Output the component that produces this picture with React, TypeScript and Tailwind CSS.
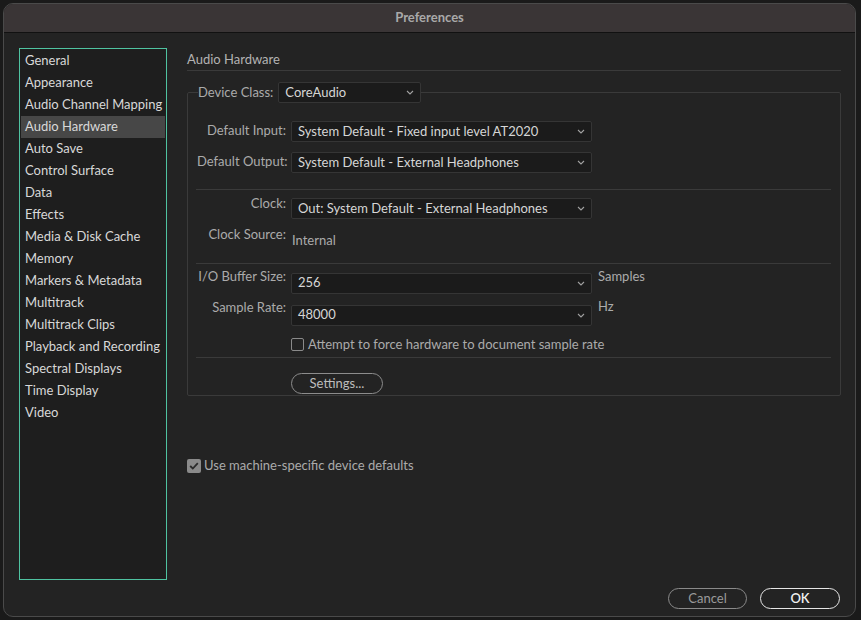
import React from "react";

const sections = [
  "General",
  "Appearance",
  "Audio Channel Mapping",
  "Audio Hardware",
  "Auto Save",
  "Control Surface",
  "Data",
  "Effects",
  "Media & Disk Cache",
  "Memory",
  "Markers & Metadata",
  "Multitrack",
  "Multitrack Clips",
  "Playback and Recording",
  "Spectral Displays",
  "Time Display",
  "Video",
];

function Chevron() {
  return (
    <svg width="8" height="5" viewBox="0 0 8 5" className="shrink-0">
      <path d="M1 1 L4 4 L7 1" fill="none" stroke="#a0a0a0" strokeWidth="1.1" />
    </svg>
  );
}

function Dropdown({ value, width }: { value: string; width: string }) {
  return (
    <div
      className={`${width} h-[21px] shrink-0 flex items-center justify-between pl-[6px] pr-[6px] bg-[#1b1b1b] border border-[#353535] rounded-[2px] text-[13px] text-[#d6d6d6]`}
    >
      <span>{value}</span>
      <Chevron />
    </div>
  );
}

function Label({ children, mt = 0 }: { children: React.ReactNode; mt?: number }) {
  return (
    <div className="w-[89px] shrink-0 text-right text-[13px] text-[#ababab] whitespace-nowrap" style={{ marginTop: mt }}>
      {children}
    </div>
  );
}

function Separator() {
  return <div className="h-px bg-[#3a3a3a] -ml-px" />;
}

export default function App() {
  return (
    <div
      className="w-[861px] h-[620px] bg-[#1a1a1a] p-[3px] pr-[5px]"
      style={{ fontFamily: "Lato, 'Noto Sans', sans-serif" }}
    >
      <div className="h-[614px] flex flex-col rounded-[10px] overflow-hidden border border-[#4a4a4a] bg-[#232323]">
        {/* Title bar */}
        <div className="h-[29px] shrink-0 flex items-center justify-center bg-[#3a3536] border-b border-[#111111]">
          <span className="text-[13px] font-bold text-[#a9a9a9]">Preferences</span>
        </div>

        {/* Body */}
        <div className="flex flex-1 pt-[15px] pl-[15px] pr-[14px]">
          {/* Sidebar */}
          <div className="w-[148px] h-[532px] shrink-0 border border-[#4fc3a1] bg-[#1e1e1e] p-px">
            {sections.map((s) => (
              <div
                key={s}
                className={`h-[22px] flex items-center pl-[4px] text-[13px] text-[#d8d8d8] whitespace-nowrap ${
                  s === "Audio Hardware" ? "bg-[#474747]" : ""
                }`}
              >
                {s}
              </div>
            ))}
          </div>

          {/* Right column */}
          <div className="flex-1 ml-[20px] flex flex-col">
            <div className="h-[23px] pt-[2px] border-b border-[#3a3a3a] text-[13px] text-[#b3b3b3]">
              Audio Hardware
            </div>

            <fieldset className="mt-[11px] border border-[#3a3a3a] px-[9px] rounded-[2px]">
              <legend className="flex items-center gap-[5px] ml-px">
                <span className="text-[13px] text-[#ababab]">Device Class:</span>
                <Dropdown value="CoreAudio" width="w-[143px]" />
              </legend>

              <div className="flex flex-col">
                <div className="flex items-start gap-[5px] mt-[18px]">
                  <Label>Default Input:</Label>
                  <Dropdown value="System Default - Fixed input level AT2020" width="w-[301px]" />
                </div>
                <div className="flex items-start gap-[5px] mt-[10px]">
                  <Label>Default Output:</Label>
                  <Dropdown value="System Default - External Headphones" width="w-[301px]" />
                </div>

                <div className="mt-[16px]">
                  <Separator />
                </div>

                <div className="flex items-start gap-[5px] mt-[8px]">
                  <Label mt={-4}>Clock:</Label>
                  <Dropdown value="Out: System Default - External Headphones" width="w-[301px]" />
                </div>
                <div className="flex items-start gap-[5px] mt-[6px]">
                  <Label>Clock Source:</Label>
                  <span className="text-[13px] text-[#ababab] pt-[6px] pl-[1px]">Internal</span>
                </div>

                <div className="mt-[12px]">
                  <Separator />
                </div>

                <div className="flex items-start gap-[5px] mt-[9px]">
                  <Label mt={-6}>I/O Buffer Size:</Label>
                  <Dropdown value="256" width="w-[301px]" />
                  <span className="text-[13px] text-[#ababab] ml-[1px] -mt-[6px]">Samples</span>
                </div>
                <div className="flex items-start gap-[5px] mt-[11px]">
                  <Label mt={-7}>Sample Rate:</Label>
                  <Dropdown value="48000" width="w-[301px]" />
                  <span className="text-[13px] text-[#ababab] ml-[1px] -mt-[8px]">Hz</span>
                </div>

                <div className="flex items-center gap-[4px] mt-[9px] ml-[94px]">
                  <div className="w-[13px] h-[13px] border border-[#8a8a8a] rounded-[2px]" />
                  <span className="text-[13px] text-[#ababab]">Attempt to force hardware to document sample rate</span>
                </div>

                <div className="mt-[3px]">
                  <Separator />
                </div>

                <div className="mt-[15px] ml-[94px] mb-px">
                  <button className="w-[92px] h-[21px] rounded-full border border-[#8c8c8c] text-[13px] text-[#bdbdbd] flex items-center justify-center">
                    Settings...
                  </button>
                </div>
              </div>
            </fieldset>

            <div className="flex items-center gap-[3px] mt-[60px]">
              <div className="w-[14px] h-[14px] rounded-[2px] bg-[#8a8a8a] flex items-center justify-center">
                <svg width="10" height="8" viewBox="0 0 10 8">
                  <path d="M1.2 4 L3.8 6.5 L8.8 1.2" fill="none" stroke="#2a2a2a" strokeWidth="1.8" />
                </svg>
              </div>
              <span className="text-[13px] text-[#ababab]">Use machine-specific device defaults</span>
            </div>
          </div>
        </div>

        {/* Footer */}
        <div className="shrink-0 flex justify-end gap-[13px] pr-[15px] pb-[8px] pt-[8px]">
          <button className="w-[79px] h-[21px] rounded-full border border-[#8a8a8a] text-[13px] text-[#9a9a9a] flex items-center justify-center">
            Cancel
          </button>
          <button className="w-[80px] h-[21px] rounded-full border border-[#e6e6e6] text-[13px] font-semibold text-[#f0f0f0] flex items-center justify-center">
            OK
          </button>
        </div>
      </div>
    </div>
  );
}
